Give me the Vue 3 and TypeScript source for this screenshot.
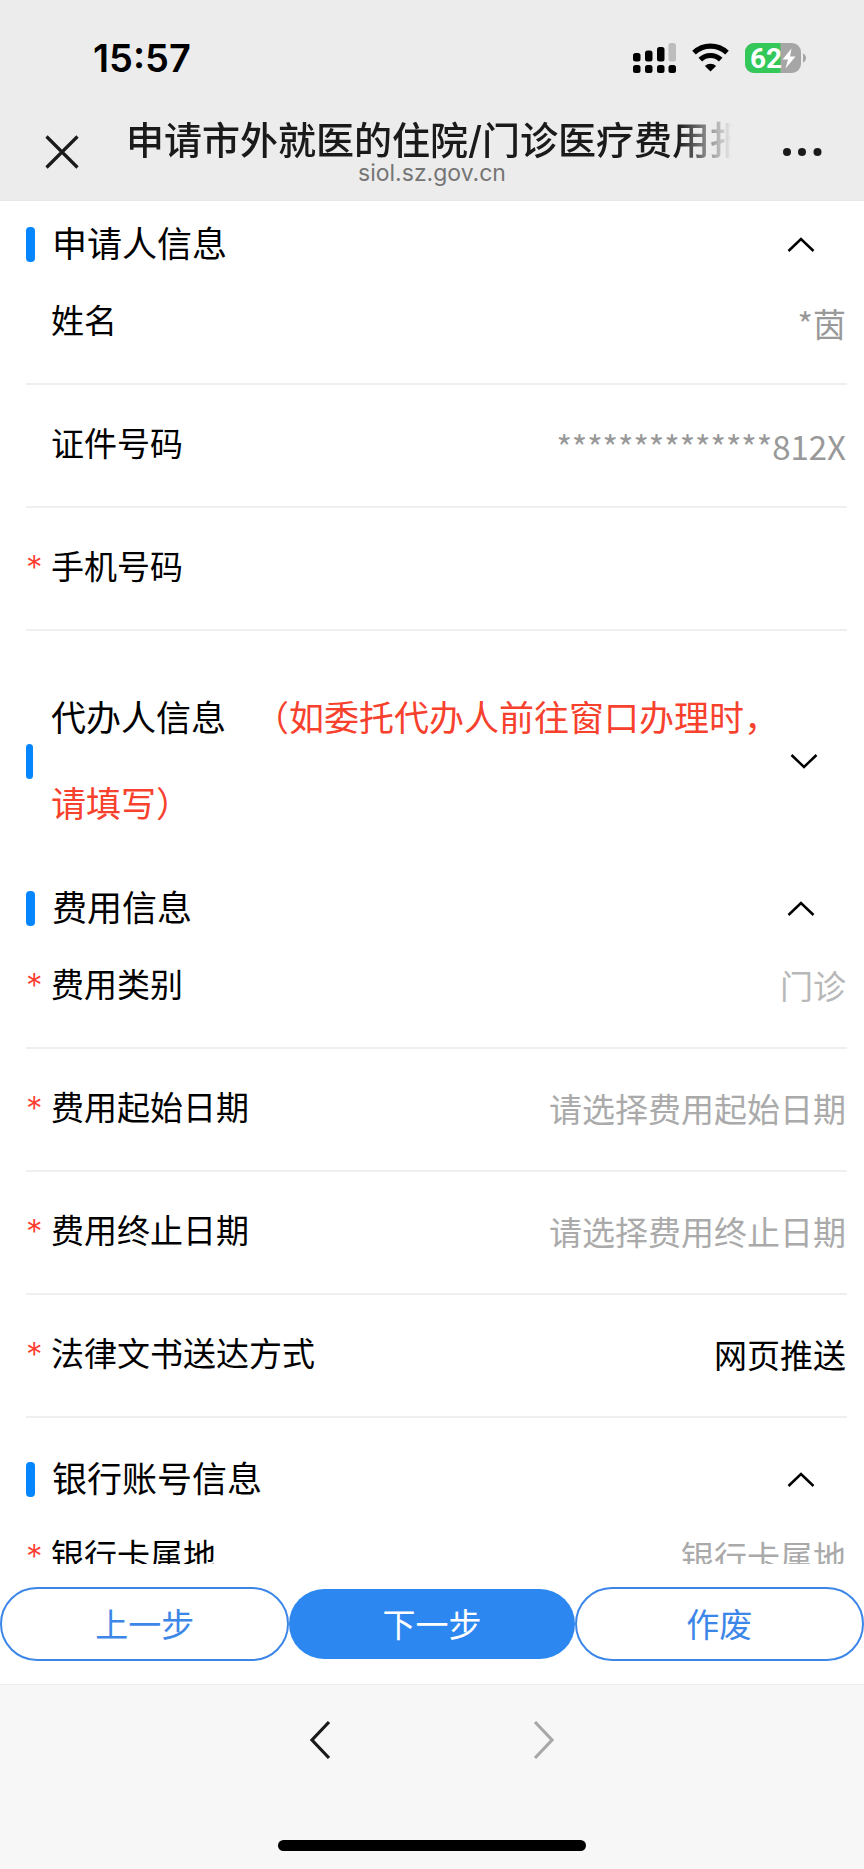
<script setup lang="ts">
import { reactive } from 'vue'

interface Field {
  id: string
  label: string
  required?: boolean
  kind: 'masked' | 'text' | 'select'
  value?: string
  placeholder?: string
  muted?: boolean
}

interface Section {
  id: string
  title: string
  note?: string
  open: boolean
  fields: Field[]
}

const sections = reactive<Section[]>([
  {
    id: 'applicant',
    title: '申请人信息',
    open: true,
    fields: [
      { id: 'name', label: '姓名', kind: 'masked', value: '*茵' },
      { id: 'idno', label: '证件号码', kind: 'masked', value: '**************812X' },
      { id: 'phone', label: '手机号码', required: true, kind: 'text' },
    ],
  },
  {
    id: 'agent',
    title: '代办人信息',
    note: '（如委托代办人前往窗口办理时，请填写）',
    open: false,
    fields: [],
  },
  {
    id: 'expense',
    title: '费用信息',
    open: true,
    fields: [
      { id: 'type', label: '费用类别', required: true, kind: 'select', value: '门诊', muted: true },
      { id: 'start', label: '费用起始日期', required: true, kind: 'text', placeholder: '请选择费用起始日期' },
      { id: 'end', label: '费用终止日期', required: true, kind: 'text', placeholder: '请选择费用终止日期' },
      { id: 'delivery', label: '法律文书送达方式', required: true, kind: 'select', value: '网页推送' },
    ],
  },
  {
    id: 'bank',
    title: '银行账号信息',
    open: true,
    fields: [
      { id: 'region', label: '银行卡属地', required: true, kind: 'text', placeholder: '银行卡属地' },
    ],
  },
])
</script>

<template>
  <div class="page">
    <header class="top">
      <div class="status">
        <span class="time">15:57</span>
        <div class="indicators">
          <svg width="43" height="30" viewBox="0 0 43 30" aria-hidden="true">
            <rect x="0" y="10" width="7.5" height="8.5" rx="2.5" />
            <rect x="12" y="7.5" width="7.5" height="11" rx="2.5" />
            <rect x="24" y="4" width="7.5" height="14.5" rx="2.5" />
            <rect x="35.5" y="0" width="7.5" height="18.5" rx="2.5" fill="#bdbdbd" />
            <rect x="0" y="22" width="7.5" height="8" rx="2.5" />
            <rect x="12" y="22" width="7.5" height="8" rx="2.5" />
            <rect x="24" y="22" width="7.5" height="8" rx="2.5" />
            <rect x="35.5" y="22" width="7.5" height="8" rx="2.5" />
          </svg>
          <svg width="37" height="30" viewBox="0 0 37 30" aria-hidden="true">
            <path d="M2 9.7A24 24 0 0 1 35 9.7" fill="none" stroke="#000" stroke-width="5.2" />
            <path d="M8.3 16.6A14.8 14.8 0 0 1 28.7 16.6" fill="none" stroke="#000" stroke-width="5.2" />
            <path d="M18.5 28.5L12.9 23A8 8 0 0 1 24.1 23Z" />
          </svg>
          <svg width="61" height="30" viewBox="0 0 61 30" aria-label="62%">
            <clipPath id="cell"><rect width="56" height="30" rx="9" /></clipPath>
            <g clip-path="url(#cell)">
              <rect width="56" height="30" fill="#a6a6a6" />
              <rect width="35.5" height="30" fill="#34c759" />
            </g>
            <path d="M58 10.5Q61 12 61 15T58 19.5Z" fill="#a6a6a6" />
            <text class="charge" x="5" y="25">62</text>
            <path d="M46.5 5.500L37.5 16.5H43L40.5 25.5L50.5 13.5H45Z" fill="#fff" />
          </svg>
        </div>
      </div>
      <nav class="nav">
        <button class="icon close" type="button" aria-label="关闭">
          <svg width="36" height="36" viewBox="0 0 36 36" aria-hidden="true">
            <path d="M2.5 2.5L33.5 33.5M33.5 2.5L2.5 33.5" fill="none" stroke="#1a1a1a" stroke-width="3.2" />
          </svg>
        </button>
        <div class="heading">
          <h1 class="title">申请市外就医的住院/门诊医疗费用报销</h1>
          <div class="host">siol.sz.gov.cn</div>
        </div>
        <button class="icon more" type="button" aria-label="更多">
          <svg width="40" height="10" viewBox="0 0 40 10" fill="#1a1a1a" aria-hidden="true">
            <circle cx="5" cy="5" r="4" /><circle cx="20" cy="5" r="4" /><circle cx="35.5" cy="5" r="4" />
          </svg>
        </button>
      </nav>
    </header>

    <main class="content">
      <section v-for="s in sections" :key="s.id" class="section">
        <div class="section-head" :class="{ collapsed: !s.open }">
          <span class="bar"></span>
          <h2 class="section-title">{{ s.title }}<span v-if="s.note" class="note">{{ s.note }}</span></h2>
          <button class="toggle" type="button" :aria-label="s.title" :aria-expanded="s.open" @click="s.open = !s.open">
            <svg width="28" height="16" viewBox="0 0 28 16" aria-hidden="true">
              <path :d="s.open ? 'M1.5 14L14 2L26.5 14' : 'M1.5 2L14 14L26.5 2'" fill="none" stroke="#000" stroke-width="2.5" />
            </svg>
          </button>
        </div>
        <template v-if="s.open">
          <div v-for="f in s.fields" :key="f.id" class="field">
            <span class="star">{{ f.required ? '*' : '' }}</span>
            <label class="label" :for="f.id">{{ f.label }}</label>
            <select v-if="f.kind === 'select'" :id="f.id" class="value" :class="{ muted: f.muted }">
              <option>{{ f.value }}</option>
            </select>
            <input
              v-else
              :id="f.id"
              class="value"
              :class="{ masked: f.kind === 'masked' }"
              type="text"
              :value="f.value"
              :placeholder="f.placeholder"
              :readonly="f.kind === 'masked'"
            />
          </div>
        </template>
      </section>
    </main>

    <div class="actions">
      <button class="action outline" type="button">上一步</button>
      <button class="action primary" type="button">下一步</button>
      <button class="action outline" type="button">作废</button>
    </div>

    <footer class="browser">
      <div class="history">
        <button class="icon" type="button" aria-label="后退">
          <svg width="24" height="40" viewBox="0 0 24 40" aria-hidden="true">
            <path d="M21 2L4 20L21 38" fill="none" stroke="#1a1a1a" stroke-width="3.2" />
          </svg>
        </button>
        <button class="icon" type="button" aria-label="前进">
          <svg width="24" height="40" viewBox="0 0 24 40" aria-hidden="true">
            <path d="M3 2L20 20L3 38" fill="none" stroke="#a8a8a8" stroke-width="3.2" />
          </svg>
        </button>
      </div>
      <div class="home"></div>
    </footer>
  </div>
</template>

<style>
body {
  margin: 0;
}
</style>

<style scoped>
.page {
  display: flex;
  flex-direction: column;
  height: 100vh;
  background: #fff;
  color: #000;
  font-family: Inter, "Noto Sans CJK SC", sans-serif;
}

button,
input,
select {
  margin: 0;
  padding: 0;
  border: 0;
  background: none;
  font: inherit;
  color: inherit;
}

svg {
  display: block;
}

.top {
  flex: none;
  background: #ececec;
  border-bottom: 1px solid #e8e8e8;
}

.status {
  display: flex;
  align-items: center;
  justify-content: space-between;
  height: 116px;
  padding: 0 58px 0 93px;
}

.time {
  font-size: 38px;
  font-weight: 600;
}

.indicators {
  display: flex;
  gap: 16px;
}

.charge {
  font-family: Roboto, sans-serif;
  font-size: 28px;
  font-weight: 700;
  fill: #fff;
}

.nav {
  display: grid;
  grid-template-columns: 126px minmax(0, 1fr) 126px;
  align-items: center;
  padding: 3px 0 15px;
}

.icon {
  display: flex;
}

.close {
  margin-left: 44px;
}

.more {
  margin-left: 44px;
}

.title {
  margin: 0;
  overflow: hidden;
  white-space: nowrap;
  font-size: 38px;
  font-weight: 500;
  line-height: 42px;
  color: #1a1a1a;
  mask-image: linear-gradient(to right, #000 calc(100% - 60px), transparent calc(100% - 6px));
}

.host {
  font-size: 23px;
  line-height: 24px;
  text-align: center;
  color: #757575;
}

.content {
  flex: 1;
  min-height: 0;
  overflow-y: auto;
  scrollbar-width: none;
  padding: 26px 17px 0 26px;
}

.section + .section {
  margin-top: 44px;
}

.section-head {
  display: grid;
  grid-template-columns: 26px minmax(0, 1fr) 60px;
  align-items: center;
}

.section-head.collapsed {
  grid-template-columns: 25px minmax(0, 1fr) 57px;
}

.bar {
  width: 9px;
  height: 35px;
  border-radius: 4px;
  background: #0586ff;
}

.collapsed .bar {
  width: 7px;
}

.section-title {
  margin: 0;
  font-size: 35px;
  font-weight: 400;
  line-height: 35px;
}

.collapsed .section-title {
  line-height: 86px;
}

.note {
  margin-left: 28px;
  color: #f7412d;
}

.toggle {
  display: flex;
}

.field {
  display: grid;
  grid-template-columns: 25px auto minmax(0, 1fr);
  align-items: center;
  height: 121px;
  border-bottom: 2px solid #efefef;
  font-size: 33px;
  line-height: 48px;
}

.star,
.label {
  padding-bottom: 4px;
}

.star {
  font-weight: 300;
  color: #ff3b30;
}

.value {
  box-sizing: border-box;
  width: 100%;
  height: 48px;
  padding-right: 1px;
  outline: 0;
  text-align: right;
  text-align-last: right;
  appearance: none;
}

.value::placeholder {
  color: #aaa;
  opacity: 1;
}

.muted {
  color: #b8b8b8;
}

.masked {
  font-family: "Noto Sans CJK SC", sans-serif;
  color: #999;
}

.actions {
  flex: none;
  display: flex;
  align-items: center;
  padding: 23px 0;
}

.action {
  box-sizing: content-box;
  flex: 1 1 0;
  height: 68px;
  padding-bottom: 2px;
  border-radius: 37px;
  font-size: 33px;
}

.outline {
  border: 2px solid #3c86e8;
  color: #3c86e8;
}

.primary {
  background: #2d87f0;
  color: #fff;
}

.browser {
  flex: none;
  display: flex;
  flex-direction: column;
  align-items: center;
  gap: 80px;
  padding: 35px 0 18px;
  border-top: 1px solid #ececec;
  background: #f7f7f7;
}

.history {
  display: flex;
  gap: 200px;
}

.home {
  width: 308px;
  height: 11px;
  border-radius: 6px;
  background: #000;
}
</style>
